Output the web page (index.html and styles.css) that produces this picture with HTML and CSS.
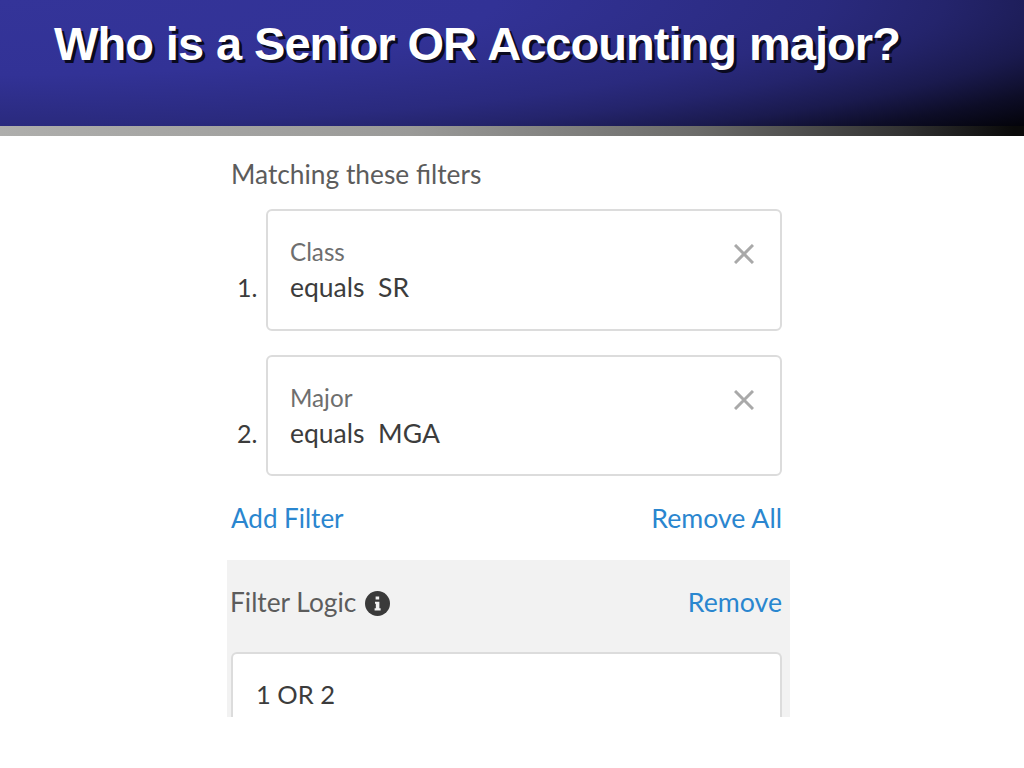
FILE: index.html
```html
<!DOCTYPE html>
<html lang="en">
<head>
<meta charset="utf-8">
<title>Who is a Senior OR Accounting major?</title>
<link rel="stylesheet" href="styles.css">
</head>
<body>
<header class="banner">
  <h1 class="title">Who is a Senior OR Accounting major?</h1>
</header>
<div class="strip"></div>
<main class="panel">
  <section class="filters">
    <h2 class="heading">Matching these filters</h2>
    <div class="row">
      <span class="num">1.</span>
      <div class="card">
        <div class="card-text">
          <div class="field">Class</div>
          <div class="value">equals&nbsp; SR</div>
        </div>
        <svg class="close" viewBox="0 0 20 20"><path d="M1 1 19 19M19 1 1 19"/></svg>
      </div>
    </div>
    <div class="row row-short">
      <span class="num">2.</span>
      <div class="card">
        <div class="card-text">
          <div class="field">Major</div>
          <div class="value">equals&nbsp; MGA</div>
        </div>
        <svg class="close" viewBox="0 0 20 20"><path d="M1 1 19 19M19 1 1 19"/></svg>
      </div>
    </div>
    <div class="actions">
      <a class="link">Add Filter</a>
      <a class="link link-wide">Remove All</a>
    </div>
  </section>
  <section class="logic">
    <div class="logic-head">
      <div class="logic-label">
        <span class="heading">Filter Logic</span>
        <svg class="info" viewBox="0 0 24 24">
          <circle cx="12" cy="12" r="12" fill="#3a3a3a"/>
          <path fill="#f2f2f2" d="M10.2 5.2h3.4v3h-3.4zM9.6 10.2h4.2v6.4h1.2v2.1H9.2v-2.1h1.2v-4.3h-.8z"/>
        </svg>
      </div>
      <a class="link link-wide">Remove</a>
    </div>
    <div class="logic-box">1 OR 2</div>
  </section>
</main>
</body>
</html>
```

FILE: styles.css
```css
* { box-sizing: border-box; }
html, body { margin: 0; padding: 0; background: #fff; }
body { width: 1024px; height: 768px; overflow: hidden; font-family: Lato, "Open Sans", sans-serif; }

.banner {
  height: 126px;
  padding: 17px 0 0 54px;
  background: radial-gradient(ellipse 1500px 227px at 0 0, #343499 0%, #323296 33%, #2a2a7e 55%, #24246c 63%, #1a1a4e 72%, #0d0d27 80%, #030309 88%);
}
.title {
  margin: 0;
  font: bold 47px/54px "Liberation Sans", Arial, sans-serif;
  letter-spacing: -0.96px;
  word-spacing: 0.8px;
  color: #fff;
  white-space: nowrap;
  text-shadow: 3px 3px 0 #0a0a20;
}
.strip {
  height: 10px;
  background: linear-gradient(90deg, #aeaeac 0%, #9a9a98 40%, #6c6c6a 68%, #333 88%, #0a0a0a 99%);
}

.panel {
  width: 563px;
  height: 581px;
  margin-left: 227px;
  overflow: hidden;
}
.filters { padding: 23px 8px 0 4px; height: 424px; }
.heading {
  margin: 0;
  font-size: 26.3px;
  line-height: 30px;
  font-weight: 400;
  color: #5c5c5c;
}
.row {
  display: flex;
  align-items: stretch;
  margin-top: 20px;
  height: 122px;
}
.row-short { margin-top: 24px; height: 121px; }
.num {
  width: 35px;
  padding: 63px 0 0 6px;
  font-size: 25px;
  line-height: 30px;
  color: #3c3c3c;
}
.card {
  flex: 1;
  display: flex;
  justify-content: space-between;
  padding: 26px 26px 0 22px;
  border: 2.5px solid #dcdcdc;
  border-radius: 6px;
  background: #fff;
}
.field { font-size: 24.2px; line-height: 30px; color: #6e6e6e; }
.value { margin-top: 5px; font-size: 26.5px; line-height: 30px; color: #3c3c3c; }
.close {
  width: 20px;
  height: 20px;
  margin-top: 7px;
  fill: none;
  stroke: #a9a9a9;
  stroke-width: 3;
}
.actions {
  display: flex;
  justify-content: space-between;
  margin-top: 27px;
}
.link { font-size: 26px; line-height: 30px; color: #2a86cf; }
.link-wide { font-size: 26.7px; }

.logic { height: 157px; padding: 27px 8px 0 4px; background: #f2f2f2; }
.logic-head { display: flex; justify-content: space-between; align-items: center; }
.logic-label { display: flex; align-items: center; gap: 9px; margin-left: -1px; }
.info { width: 25px; height: 25px; margin-top: 3px; }
.logic-box {
  height: 90px;
  margin-top: 35px;
  padding: 25px 0 0 23px;
  border: 2.5px solid #dcdcdc;
  border-bottom: 0;
  border-radius: 6px 6px 0 0;
  background: #fff;
  font-size: 25.5px;
  line-height: 30px;
  color: #3c3c3c;
}
```
